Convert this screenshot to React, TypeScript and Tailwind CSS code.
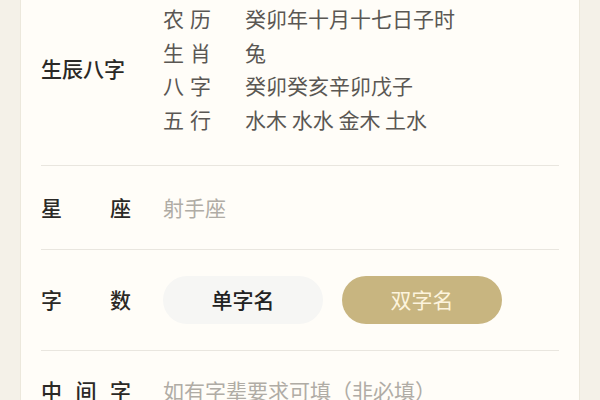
import React from "react";

interface InfoRow {
  label: [string, string];
  value: string;
}

const bazi: InfoRow[] = [
  { label: ["农", "历"], value: "癸卯年十月十七日子时" },
  { label: ["生", "肖"], value: "兔" },
  { label: ["八", "字"], value: "癸卯癸亥辛卯戊子" },
  { label: ["五", "行"], value: "水木 水水 金木 土水" },
];

function Label({ chars }: { chars: string[] }) {
  return (
    <div className="flex w-[90px] shrink-0 justify-between font-medium text-[#2b2926]">
      {chars.map((c, i) => (
        <span key={i}>{c}</span>
      ))}
    </div>
  );
}

export default function App() {
  return (
    <div
      className="h-[400px] w-[600px] overflow-hidden bg-[#f4f1e8]"
      style={{ fontFamily: '"Noto Sans CJK SC", "Noto Sans", sans-serif' }}
    >
      <div className="mx-[20px] h-full border-x border-[#ece8dc] bg-[#fffdf8] px-[20px] text-[21px]">
        {/* 生辰八字 */}
        <div className="flex items-center border-b border-[#e9e6df] pt-[2px] pb-[29px]">
          <Label chars={["生辰八字"]} />
          <div className="ml-[32px] flex flex-col">
            {bazi.map((row) => (
              <div key={row.value} className="flex h-[33.5px] items-center text-[#5a5753]">
                <div className="flex w-[48px] justify-between">
                  <span>{row.label[0]}</span>
                  <span>{row.label[1]}</span>
                </div>
                <span className="ml-[34px]">{row.value}</span>
              </div>
            ))}
          </div>
        </div>

        {/* 星座 */}
        <div className="flex h-[84px] items-center border-b border-[#e9e6df]">
          <Label chars={["星", "座"]} />
          <span className="ml-[32px] text-[#b0aca5]">射手座</span>
        </div>

        {/* 字数 */}
        <div className="flex h-[101px] items-center border-b border-[#e9e6df]">
          <Label chars={["字", "数"]} />
          <div className="ml-[32px] flex gap-[19px]">
            <button className="flex h-[48px] w-[160px] items-center justify-center rounded-full bg-[#f6f6f4] font-medium text-[#222]">
              单字名
            </button>
            <button className="flex h-[48px] w-[160px] items-center justify-center rounded-full bg-[#c8b580] text-[#fdf4dd]">
              双字名
            </button>
          </div>
        </div>

        {/* 中间字 */}
        <div className="flex h-[80px] items-center">
          <Label chars={["中", "间", "字"]} />
          <span className="ml-[32px] text-[#b0aca5]">如有字辈要求可填（非必填）</span>
        </div>
      </div>
    </div>
  );
}
